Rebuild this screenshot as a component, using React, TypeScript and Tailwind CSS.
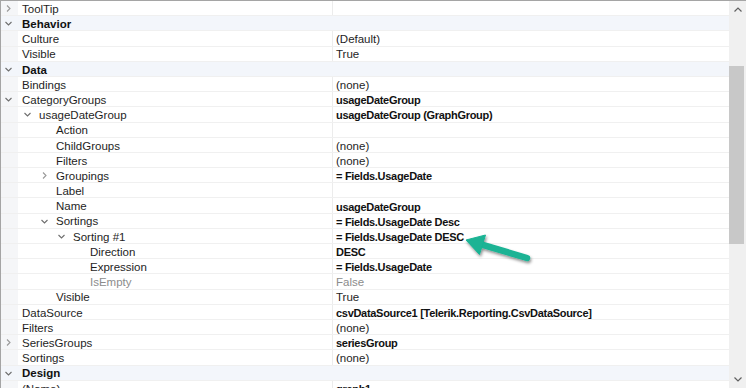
import React from "react";

type Row = {
  label: string;
  value?: string;
  level: number;
  expander?: "open" | "closed";
  category?: boolean;
  bold?: boolean;
  dim?: boolean;
};

const rows: Row[] = [
  { label: "ToolTip", level: 0, expander: "closed" },
  { label: "Behavior", level: 0, expander: "open", category: true },
  { label: "Culture", value: "(Default)", level: 0 },
  { label: "Visible", value: "True", level: 0 },
  { label: "Data", level: 0, expander: "open", category: true },
  { label: "Bindings", value: "(none)", level: 0 },
  { label: "CategoryGroups", value: "usageDateGroup", level: 0, expander: "open", bold: true },
  { label: "usageDateGroup", value: "usageDateGroup (GraphGroup)", level: 1, expander: "open", bold: true },
  { label: "Action", value: "", level: 2 },
  { label: "ChildGroups", value: "(none)", level: 2 },
  { label: "Filters", value: "(none)", level: 2 },
  { label: "Groupings", value: "= Fields.UsageDate", level: 2, expander: "closed", bold: true },
  { label: "Label", value: "", level: 2 },
  { label: "Name", value: "usageDateGroup", level: 2, bold: true },
  { label: "Sortings", value: "= Fields.UsageDate Desc", level: 2, expander: "open", bold: true },
  { label: "Sorting #1", value: "= Fields.UsageDate DESC", level: 3, expander: "open", bold: true },
  { label: "Direction", value: "DESC", level: 4, bold: true },
  { label: "Expression", value: "= Fields.UsageDate", level: 4, bold: true },
  { label: "IsEmpty", value: "False", level: 4, dim: true },
  { label: "Visible", value: "True", level: 2 },
  { label: "DataSource", value: "csvDataSource1 [Telerik.Reporting.CsvDataSource]", level: 0, bold: true },
  { label: "Filters", value: "(none)", level: 0 },
  { label: "SeriesGroups", value: "seriesGroup", level: 0, expander: "closed", bold: true },
  { label: "Sortings", value: "(none)", level: 0 },
  { label: "Design", level: 0, expander: "open", category: true },
  { label: "(Name)", value: "graph1", level: 0, bold: true },
];

const indent: Record<number, string> = {
  1: "w-[4px]",
  2: "w-[21px]",
  3: "w-[38px]",
  4: "w-[55px]",
};

function Chevron({ dir }: { dir: "open" | "closed" }) {
  return (
    <svg width="7" height="7" viewBox="0 0 7 7" className="shrink-0">
      {dir === "open" ? (
        <path d="M0.5 2 L3.5 5 L6.5 2" fill="none" stroke="#6e6e6e" strokeWidth="1.1" />
      ) : (
        <path d="M2 0.5 L5 3.5 L2 6.5" fill="none" stroke="#999" strokeWidth="1.1" />
      )}
    </svg>
  );
}

function PropertyRow({ row }: { row: Row }) {
  const nameCls = row.category
    ? "font-bold text-[#111]"
    : row.dim
      ? "text-[#8c8c8c]"
      : "text-[#1e1e1e]";
  const valueCls = row.dim
    ? "text-[#8c8c8c]"
    : row.bold
      ? "font-bold text-[#111] text-[11px] tracking-[-0.3px]"
      : "text-[#1e1e1e]";

  return (
    <div
      className={`flex h-[15.2px] shrink-0 items-center border-b border-[#f0f0f0] ${
        row.category ? "bg-[#f3f6fb]" : "bg-white"
      }`}
    >
      <div
        className={`flex h-full w-[17px] shrink-0 items-center pl-[4px] pt-[1px] ${
          row.category ? "bg-[#f3f6fb]" : "bg-[#f5f6f8]"
        }`}
      >
        {row.level === 0 && row.expander && <Chevron dir={row.expander} />}
      </div>
      <div className="flex h-full w-[314px] shrink-0 items-center pt-[3px]">
        {row.level === 0 ? (
          <div className="w-[4px] shrink-0" />
        ) : (
          <>
            <div className={`${indent[row.level]} shrink-0`} />
            <div className="flex w-[17px] shrink-0 items-center pl-[2px] -mt-[2px]">
              {row.expander && <Chevron dir={row.expander} />}
            </div>
          </>
        )}
        <span className={`whitespace-nowrap ${nameCls}`}>{row.label}</span>
      </div>
      {!row.category && (
        <div className="flex h-full flex-1 items-center border-l border-[#ececec] pl-[3px] pt-[3px]">
          <span className={`whitespace-nowrap ${valueCls}`}>{row.value}</span>
        </div>
      )}
    </div>
  );
}

function Arrow() {
  return (
    <svg
      width="80"
      height="45"
      viewBox="0 0 80 45"
      className="pointer-events-none absolute left-[460px] top-[225px]"
    >
      <defs>
        <filter id="sh" x="-20%" y="-30%" width="150%" height="180%">
          <feDropShadow dx="1" dy="2" stdDeviation="1.4" floodColor="#000" floodOpacity="0.45" />
        </filter>
      </defs>
      <g filter="url(#sh)" fill="#1ab394" stroke="#1ab394">
        <line x1="20" y1="18.4" x2="66" y2="32" strokeWidth="6.5" strokeLinecap="round" />
        <polygon points="5,14 24.5,9 18.5,28.5" strokeWidth="1" strokeLinejoin="round" />
      </g>
    </svg>
  );
}

export default function App() {
  return (
    <div
      className="relative flex h-[388px] w-[746px] overflow-hidden border-l border-t border-[#a5a5a5] bg-white text-[11.5px] leading-none"
      style={{ fontFamily: '"Liberation Sans", Arial, sans-serif' }}
    >
      <div className="flex flex-1 flex-col overflow-hidden">
        {rows.map((r, i) => (
          <PropertyRow key={i} row={r} />
        ))}
      </div>
      <div className="flex w-[17px] shrink-0 flex-col bg-[#f0f0f0]">
        <div className="flex h-[16px] items-center justify-center">
          <svg width="8" height="5" viewBox="0 0 8 5">
            <path d="M0.5 4.5 L4 1 L7.5 4.5" fill="none" stroke="#606060" strokeWidth="1.2" />
          </svg>
        </div>
        <div className="h-[49px]" />
        <div className="mr-[2px] h-[178px] bg-[#c8c8c8]" />
        <div className="flex-1" />
        <div className="flex h-[18px] items-center justify-center">
          <svg width="8" height="5" viewBox="0 0 8 5">
            <path d="M0.5 0.5 L4 4 L7.5 0.5" fill="none" stroke="#606060" strokeWidth="1.2" />
          </svg>
        </div>
      </div>
      <Arrow />
    </div>
  );
}
